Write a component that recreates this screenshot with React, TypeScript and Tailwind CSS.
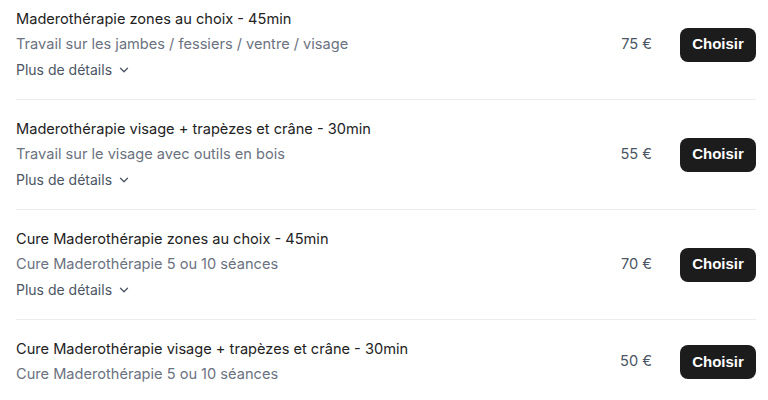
import { ChevronDown } from 'lucide-react';

interface Service {
  title: string;
  desc: string;
  price: string;
  details?: boolean;
}

const services: Service[] = [
  { title: 'Maderothérapie zones au choix - 45min', desc: 'Travail sur les jambes / fessiers / ventre / visage', price: '75 €', details: true },
  { title: 'Maderothérapie visage + trapèzes et crâne - 30min', desc: 'Travail sur le visage avec outils en bois', price: '55 €', details: true },
  { title: 'Cure Maderothérapie zones au choix - 45min', desc: 'Cure Maderothérapie 5 ou 10 séances', price: '70 €', details: true },
  { title: 'Cure Maderothérapie visage + trapèzes et crâne - 30min', desc: 'Cure Maderothérapie 5 ou 10 séances', price: '50 €' },
];

export default function App() {
  return (
    <div className="bg-white h-[400px] overflow-hidden pl-4 pr-3 font-['Inter',sans-serif]">
      <div className="-mt-[10px]">
        {services.map((s, i) => (
          <div
            key={i}
            className={`flex items-center py-[17px] ${i < services.length - 1 ? 'border-b border-[#ececec]' : ''}`}
          >
            <div className="flex-1 text-[14.6px] leading-[25px]">
              <div className="text-[#222222]">{s.title}</div>
              <div className="text-[#6b7280]">{s.desc}</div>
              {s.details && (
                <button className="flex items-center gap-[5px] text-[14px] text-[#4b5563]">
                  Plus de détails
                  <ChevronDown className="w-3.5 h-3.5" strokeWidth={2.2} />
                </button>
              )}
            </div>
            <div className="text-[14.6px] text-[#4b5563] mr-7">{s.price}</div>
            <button className="h-[34px] w-[76px] rounded-lg bg-[#1c1c1c] text-white text-[15px] font-bold font-['Liberation_Sans',sans-serif]">
              Choisir
            </button>
          </div>
        ))}
      </div>
    </div>
  );
}
